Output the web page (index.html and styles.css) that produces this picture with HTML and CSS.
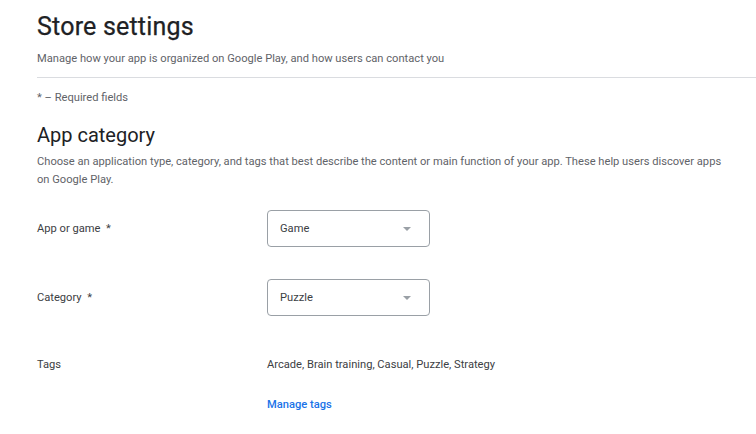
FILE: index.html
```html
<!DOCTYPE html>
<html>
<head>
<meta charset="utf-8">
<link rel="stylesheet" href="styles.css">
</head>
<body>
<div class="page">
  <header class="head">
    <h1 class="title">Store settings</h1>
    <p class="subtitle">Manage how your app is organized on Google Play, and how users can contact you</p>
  </header>
  <div class="divider"></div>
  <p class="required">* – Required fields</p>
  <section class="section">
    <h2 class="section-title">App category</h2>
    <p class="section-desc">Choose an application type, category, and tags that best describe the content or main function of your app. These help users discover apps on Google Play.</p>
    <div class="form">
      <div class="row">
        <div class="label">App or game&nbsp; *</div>
        <div class="select"><span>Game</span><span class="arrow"></span></div>
      </div>
      <div class="row">
        <div class="label">Category&nbsp; *</div>
        <div class="select"><span>Puzzle</span><span class="arrow"></span></div>
      </div>
      <div class="row row-tags">
        <div class="label">Tags</div>
        <div class="tags">
          <div class="tag-list">Arcade, Brain training, Casual, Puzzle, Strategy</div>
          <a class="link" href="#">Manage tags</a>
        </div>
      </div>
    </div>
  </section>
</div>
</body>
</html>
```
FILE: styles.css
```css
* { box-sizing: border-box; }
html, body { margin: 0; padding: 0; background: #fff; }
body {
  font-family: Roboto, "Liberation Sans", Arial, sans-serif;
  color: #3c4043;
  width: 756px;
  height: 434px;
  overflow: hidden;
}
.page {
  padding: 11px 0 0 37px;
}
.title {
  margin: 0;
  font-size: 25px;
  font-weight: 400;
  line-height: 32px;
  color: #202124;
  letter-spacing: 0.2px;
  -webkit-text-stroke: 0.25px #202124;
}
.subtitle {
  margin: 8px 0 0;
  font-size: 11.15px;
  line-height: 16px;
  color: #5f6368;
}
.divider {
  height: 1px;
  background: #dadce0;
  margin-top: 10px;
}
.required {
  margin: 12px 0 0;
  font-size: 11.15px;
  line-height: 16px;
  color: #5f6368;
}
.section { padding-right: 24px; }
.section-title {
  margin: 16px 0 0;
  font-size: 20px;
  font-weight: 400;
  line-height: 26px;
  color: #202124;
}
.section-desc {
  margin: 5px 0 0;
  font-size: 11.15px;
  line-height: 18px;
  color: #5f6368;
}
.form {
  margin-top: 21px;
  display: flex;
  flex-direction: column;
  gap: 32px;
}
.row {
  display: flex;
  align-items: center;
}
.label {
  width: 230px;
  font-size: 11.15px;
  line-height: 16px;
  color: #3c4043;
}
.select {
  width: 163px;
  height: 37px;
  border: 1px solid #9aa0a6;
  border-radius: 4px;
  display: flex;
  align-items: center;
  justify-content: space-between;
  padding: 0 18px 0 12px;
  font-size: 11.15px;
  color: #3c4043;
}
.arrow {
  width: 0;
  height: 0;
  border-left: 4px solid transparent;
  border-right: 4px solid transparent;
  border-top: 4px solid #9aa0a6;
}
.row-tags {
  align-items: flex-start;
  margin-top: 9px;
}
.tags {
  display: flex;
  flex-direction: column;
  gap: 24px;
}
.tag-list {
  font-size: 11.15px;
  line-height: 16px;
  color: #3c4043;
}
.link {
  font-size: 11.15px;
  line-height: 16px;
  color: #1a73e8;
  text-decoration: none;
  font-weight: 500;
}
```
